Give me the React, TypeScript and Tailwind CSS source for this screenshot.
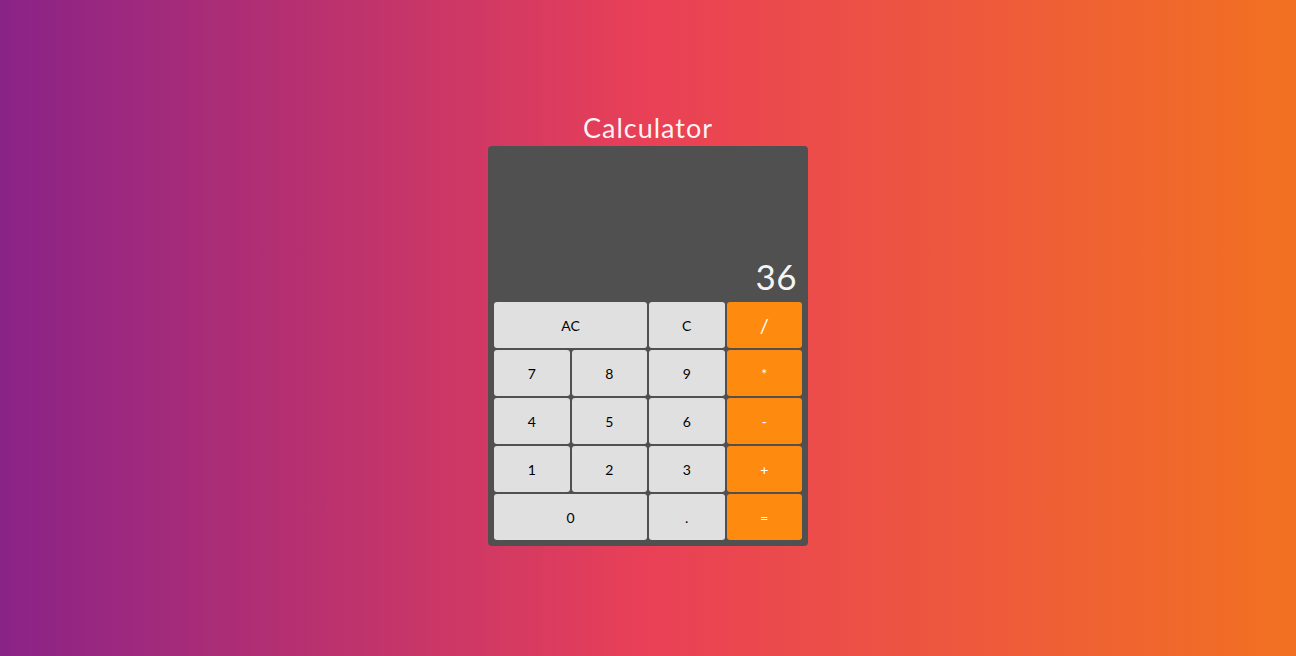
const keys = [
  { label: "AC", span: true },
  { label: "C" },
  { label: "/", op: true, big: true },
  { label: "7" },
  { label: "8" },
  { label: "9" },
  { label: "*", op: true },
  { label: "4" },
  { label: "5" },
  { label: "6" },
  { label: "-", op: true },
  { label: "1" },
  { label: "2" },
  { label: "3" },
  { label: "+", op: true },
  { label: "0", span: true },
  { label: "." },
  { label: "=", op: true },
];

export default function App() {
  return (
    <div
      className="w-full h-screen flex flex-col items-center justify-center bg-[linear-gradient(to_right,#8a2387,#e94057,#f27121)]"
      style={{ fontFamily: "Lato, 'Noto Sans', sans-serif" }}
    >
      <h1 className="text-[27px] leading-[36px] text-white/95 tracking-[1px]">Calculator</h1>
      <div className="w-[320px] bg-[#505050] rounded-[4px] p-[6px] flex flex-col">
        <div className="h-[148px] flex items-end justify-end pr-[5px] pb-[6px]">
          <span className="text-[35px] leading-none text-white/95 tracking-[0.5px]">36</span>
        </div>
        <div className="grid grid-cols-4 gap-[2px] mt-[2px]">
          {keys.map((k) => (
            <button
              key={k.label}
              className={
                "h-[46px] rounded-[3px] flex items-center justify-center " +
                (k.span ? "col-span-2 " : "") +
                (k.op ? "bg-[#ff8a10] text-white " : "bg-[#e0e0e0] text-black ") +
                (k.big ? "text-[20px]" : "text-[14px]")
              }
            >
              {k.label}
            </button>
          ))}
        </div>
      </div>
    </div>
  );
}
